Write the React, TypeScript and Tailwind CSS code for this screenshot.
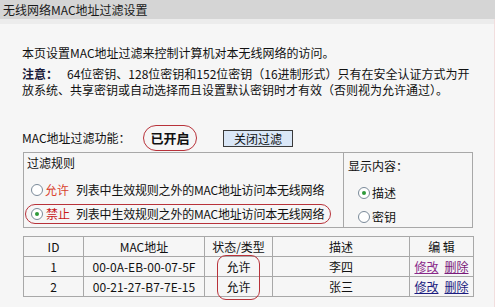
const FONT = { fontFamily: '"Noto Sans CJK SC", "Liberation Sans", sans-serif' };

const Radio = ({ checked }: { checked?: boolean }) => (
  <span className="flex h-[12px] w-[12px] shrink-0 items-center justify-center rounded-full border border-[#7a8a99] bg-white">
    {checked && <span className="h-[4px] w-[4px] rounded-full bg-[#2f9a3a]" />}
  </span>
);

const rows = [
  { id: '1', mac: '00-0A-EB-00-07-5F', state: '允许', desc: '李四', visited: true },
  { id: '2', mac: '00-21-27-B7-7E-15', state: '允许', desc: '张三', visited: false },
];

const App = () => {
  return (
    <div className="relative h-[307px] w-[495px] overflow-hidden bg-[#f6f6f6] text-[12px] text-[#111]" style={FONT}>
      {/* title bar */}
      <div className="h-[19px] bg-[#d5d5d5] pl-[3px] leading-[19px] text-[#1a1a1a]">无线网络MAC地址过滤设置</div>
      <div className="h-[5px] bg-[#ececec]" />

      <div className="pl-[22px] pr-[22px]">
        <p className="mt-[21px] leading-[16px]">本页设置MAC地址过滤来控制计算机对本无线网络的访问。</p>
        <p className="mt-[5px] whitespace-nowrap leading-[16px]">
          <b className="font-bold text-[#1a1a3a]">注意：</b>
          <span className="ml-[9px]">64位密钥、128位密钥和152位密钥（16进制形式）只有在安全认证方式为开</span>
          <br />
          放系统、共享密钥或自动选择而且设置默认密钥时才有效（否则视为允许通过）。
        </p>

        {/* switch row */}
        <div className="mt-[27px] flex h-[26px] items-center">
          <span className="w-[121px]">MAC地址过滤功能：</span>
          <span className="flex h-[26px] w-[54px] items-center justify-center rounded-[13px] border border-[#b8323a] font-bold text-[13px]">
            已开启
          </span>
          <button className="ml-[26px] h-[17px] w-[70px] border border-[#3a3a3a] bg-[#dae7f7] text-[12px] leading-[15px]">
            关闭过滤
          </button>
        </div>

        {/* filter rule box */}
        <div className="ml-[1px] mt-[1px] flex h-[76px] w-[450px] border border-[#a8a8a8]">
          <div className="w-[320px] shrink-0 border-r border-[#a8a8a8] pl-[1px] pt-[2px]">
            <div className="pl-[2px] leading-[16px]">过滤规则</div>
            <div className="mt-[9px] flex h-[20px] w-[306px] items-center whitespace-nowrap rounded-[10px] border border-transparent pl-[5px]">
              <Radio />
              <span className="ml-[2px] text-[#d8402c]">允许</span>
              <span className="ml-[7px] tracking-[-0.2px]">列表中生效规则之外的MAC地址访问本无线网络</span>
            </div>
            <div className="mt-[4px] flex h-[20px] w-[306px] items-center whitespace-nowrap rounded-[10px] border border-[#b8323a] pl-[5px]">
              <Radio checked />
              <span className="ml-[3px] text-[#c81818]">禁止</span>
              <span className="ml-[6px] tracking-[-0.2px]">列表中生效规则之外的MAC地址访问本无线网络</span>
            </div>
          </div>
          <div className="flex-1 pl-[4px] pt-[5px]">
            <div className="leading-[16px]">显示内容：</div>
            <div className="mt-[9px] flex h-[20px] items-center pl-[10px]">
              <Radio checked />
              <span className="ml-[2px]">描述</span>
            </div>
            <div className="mt-[4px] flex h-[20px] items-center pl-[10px]">
              <Radio />
              <span className="ml-[2px]">密钥</span>
            </div>
          </div>
        </div>

        {/* list table */}
        <table className="ml-[1px] mt-[8px] w-[450px] table-fixed border-collapse border border-[#a8a8a8] text-center">
          <colgroup>
            <col className="w-[60px]" />
            <col className="w-[121px]" />
            <col className="w-[68px]" />
            <col className="w-[137px]" />
            <col className="w-[64px]" />
          </colgroup>
          <thead>
            <tr className="h-[20px]">
              <th className="border border-[#a8a8a8] font-normal">ID</th>
              <th className="border border-[#a8a8a8] font-normal">MAC地址</th>
              <th className="border border-[#a8a8a8] font-normal">状态/类型</th>
              <th className="border border-[#a8a8a8] font-normal">描述</th>
              <th className="border border-[#a8a8a8] font-normal">编 辑</th>
            </tr>
          </thead>
          <tbody>
            {rows.map((r) => (
              <tr key={r.id} className="h-[20px]">
                <td className="border border-[#a8a8a8] leading-[18px]">{r.id}</td>
                <td className="border border-[#a8a8a8] leading-[18px]">{r.mac}</td>
                <td className="border border-[#a8a8a8] leading-[18px]">{r.state}</td>
                <td className="border border-[#a8a8a8] leading-[18px]">{r.desc}</td>
                <td className="border border-[#a8a8a8] leading-[18px]">
                  <a className={`underline ${r.visited ? 'text-[#8a2a8a]' : 'text-[#1c1c80]'}`} href="#">修改</a>
                  <a className={`ml-[6px] underline ${r.visited ? 'text-[#7a1a7a]' : 'text-[#1c1c80]'}`} href="#">删除</a>
                </td>
              </tr>
            ))}
          </tbody>
        </table>
      </div>

      {/* red mark around status cells */}
      <div className="absolute left-[217px] top-[255px] h-[45px] w-[43px] rounded-[9px] border border-[#b8323a]" />
      <div className="absolute right-0 top-[19px] h-[288px] w-[1px] bg-[#f2dede]" />
    </div>
  );
};

export default App;
